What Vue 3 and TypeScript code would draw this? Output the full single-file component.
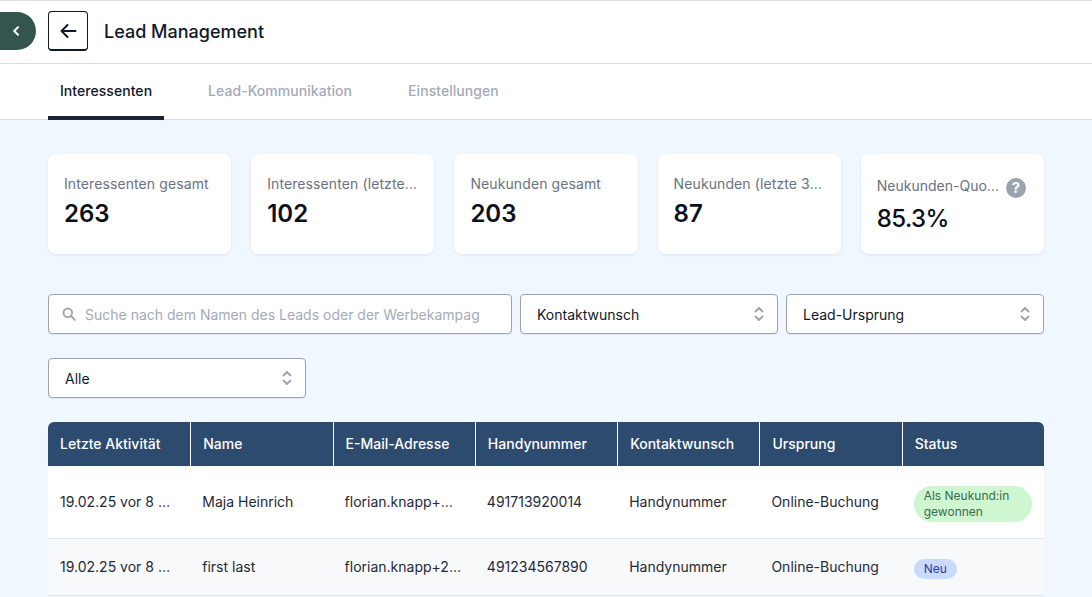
<script setup lang="ts">
interface Stat { label: string; value: string; help?: boolean }
interface Lead { activity: string; name: string; email: string; phone: string; contact: string; origin: string; status: string; kind: 'won' | 'new' }
const stats: Stat[] = [
  { label: 'Interessenten gesamt', value: '263' },
  { label: 'Interessenten (letzten 30 Tage)', value: '102' },
  { label: 'Neukunden gesamt', value: '203' },
  { label: 'Neukunden (letzte 30 Tage)', value: '87' },
  { label: 'Neukunden-Quote gesamt', value: '85.3%', help: true },
]
const columns = ['Letzte Aktivität', 'Name', 'E-Mail-Adresse', 'Handynummer', 'Kontaktwunsch', 'Ursprung', 'Status']
const leads: Lead[] = [
  { activity: '19.02.25 vor 8 Tagen', name: 'Maja Heinrich', email: 'florian.knapp+maja@example.de', phone: '491713920014', contact: 'Handynummer', origin: 'Online-Buchung', status: 'Als Neukund:in gewonnen', kind: 'won' },
  { activity: '19.02.25 vor 8 Tagen', name: 'first last', email: 'florian.knapp+2@example.de', phone: '491234567890', contact: 'Handynummer', origin: 'Online-Buchung', status: 'Neu', kind: 'new' },
]
</script>

<template>
  <div class="page">
    <header class="topbar">
      <button class="collapse" aria-label="Seitenleiste">
        <svg width="10" height="10" viewBox="0 0 10 10" fill="none"><path d="M7 1.2 3.2 5 7 8.8" stroke="#fff" stroke-width="2" stroke-linecap="round" stroke-linejoin="round"/></svg>
      </button>
      <button class="back" aria-label="Zurück">
        <svg width="18" height="18" viewBox="0 0 18 18" fill="none"><path d="M16.5 9H2.5M8.5 3 2.5 9l6 6" stroke="#111827" stroke-width="2" stroke-linecap="round" stroke-linejoin="round"/></svg>
      </button>
      <h1>Lead Management</h1>
    </header>
    <nav class="tabs">
      <a class="tab active">Interessenten</a>
      <a class="tab">Lead-Kommunikation</a>
      <a class="tab">Einstellungen</a>
    </nav>
    <main class="content">
      <section class="stats">
        <div v-for="s in stats" :key="s.label" class="card">
          <div class="label-row">
            <span class="label">{{ s.label }}</span>
            <svg v-if="s.help" class="help" width="20" height="20" viewBox="0 0 20 20"><circle cx="10" cy="10" r="10" fill="#9ca3af"/><text x="10" y="14.8" text-anchor="middle" class="help-mark">?</text></svg>
          </div>
          <div class="value">{{ s.value }}</div>
        </div>
      </section>
      <section class="filters">
        <div class="search">
          <svg width="16" height="16" viewBox="0 0 16 16" fill="none"><circle cx="6.8" cy="6.8" r="4.3" stroke="#9ca3af" stroke-width="1.8"/><path d="m10.2 10.2 3.6 3.6" stroke="#9ca3af" stroke-width="1.8" stroke-linecap="round"/></svg>
          <span class="placeholder">Suche nach dem Namen des Leads oder der Werbekampagne</span>
        </div>
        <div class="select"><span>Kontaktwunsch</span><svg class="updown" width="12" height="18" viewBox="0 0 12 18" fill="none"><path d="M2.5 6.5 6 3l3.5 3.5M2.5 11.5 6 15l3.5-3.5" stroke="#9ca3af" stroke-width="1.8" stroke-linecap="round" stroke-linejoin="round"/></svg></div>
        <div class="select"><span>Lead-Ursprung</span><svg class="updown" width="12" height="18" viewBox="0 0 12 18" fill="none"><path d="M2.5 6.5 6 3l3.5 3.5M2.5 11.5 6 15l3.5-3.5" stroke="#9ca3af" stroke-width="1.8" stroke-linecap="round" stroke-linejoin="round"/></svg></div>
      </section>
      <section class="filters second">
        <div class="select"><span>Alle</span><svg class="updown" width="12" height="18" viewBox="0 0 12 18" fill="none"><path d="M2.5 6.5 6 3l3.5 3.5M2.5 11.5 6 15l3.5-3.5" stroke="#9ca3af" stroke-width="1.8" stroke-linecap="round" stroke-linejoin="round"/></svg></div>
      </section>
      <table class="table">
        <thead>
          <tr><th v-for="c in columns" :key="c">{{ c }}</th></tr>
        </thead>
        <tbody>
          <tr v-for="l in leads" :key="l.name">
            <td><span class="cut">{{ l.activity }}</span></td>
            <td><span class="cut">{{ l.name }}</span></td>
            <td><span class="cut">{{ l.email }}</span></td>
            <td><span class="cut">{{ l.phone }}</span></td>
            <td><span class="cut">{{ l.contact }}</span></td>
            <td><span class="cut">{{ l.origin }}</span></td>
            <td class="status"><span class="badge" :class="l.kind">{{ l.status }}</span></td>
          </tr>
        </tbody>
      </table>
    </main>
  </div>
</template>

<style>
html, body { margin: 0; background: #f0f7ff; }
</style>

<style scoped>
* { box-sizing: border-box; }
.page { height: 597px; overflow: hidden; font-family: Inter, "Liberation Sans", sans-serif; color: #111827; background: #f0f7ff; display: flex; flex-direction: column; }
.topbar { height: 64px; flex: none; background: #fff; border-top: 1px solid #e0e0e0; border-bottom: 1px solid #d8e0ec; display: flex; align-items: center; }
.collapse { width: 36px; height: 38px; margin-top: -2px; border: 0; padding: 0 0 0 11px; background: #34554f; border-radius: 0 19px 19px 0; display: flex; align-items: center; justify-content: flex-start; }
.back { width: 40px; height: 40px; margin-left: 12px; margin-top: -2px; border: 1px solid #111827; border-bottom-width: 2px; border-radius: 4px; background: #fff; padding: 0; display: flex; align-items: center; justify-content: center; }
h1 { margin: 0 0 0 16px; font-size: 18px; font-weight: 500; line-height: 24px; color: #111827; }
.tabs { height: 56px; flex: none; background: #fff; border-bottom: 1px solid #d8e0ec; padding-left: 48px; display: flex; gap: 32px; }
.tab { height: 56px; padding: 0 12px 4px; display: flex; align-items: center; font-size: 14px; font-weight: 500; letter-spacing: 0.05px; color: #a5a9b5; }
.tab.active { color: #111827; box-shadow: inset 0 -4px 0 #1a2233; }
.content { padding: 34px 48px 0; }
.stats { display: grid; grid-template-columns: repeat(5, minmax(0, 1fr)); gap: 20px; }
.card { height: 100px; background: #fff; border-radius: 8px; padding: 20px 16px; box-shadow: 0 1px 3px rgba(17, 24, 39, 0.08); min-width: 0; display: flex; flex-direction: column; }
.label-row { display: flex; align-items: center; gap: 6px; height: 20px; }
.label { flex: 1; min-width: 0; font-size: 14px; line-height: 20px; color: #6b7280; white-space: nowrap; overflow: hidden; text-overflow: ellipsis; letter-spacing: 0.1px; }
.help { flex: none; margin-top: 4px; margin-right: 2px; }
.help-mark { font-size: 15px; font-weight: 700; fill: #fff; }
.value { margin-top: 4px; font-size: 24px; line-height: 32px; font-weight: 600; color: #0b0f19; }
.card:last-child .value { font-weight: 500; margin-top: 7px; letter-spacing: -0.6px; }
.card:last-child .label-row { margin-top: 2px; }
.card:last-child .label { letter-spacing: 0; }
.filters { display: grid; grid-template-columns: 464px 258px 258px; gap: 8px; margin-top: 40px; }
.filters.second { grid-template-columns: 258px; margin-top: 24px; }
.search, .select { height: 40px; background: #fff; border: 1px solid #9ca3af; border-radius: 4px; display: flex; align-items: center; font-size: 14px; box-shadow: 0 1px 1px rgba(17, 24, 39, 0.06); }
.search { padding: 0 32px 0 12px; gap: 8px; }
.search svg { flex: none; }
.placeholder { color: #a5a9b5; white-space: nowrap; overflow: hidden; }
.select { padding: 0 12px 0 16px; justify-content: space-between; color: #111827; }
.table { width: 100%; margin-top: 24px; border-collapse: separate; border-spacing: 0; table-layout: fixed; font-size: 14px; }
th { height: 44px; background: #2d4b6e; color: #fff; font-weight: 500; text-align: left; padding: 0 12px 2px; border-left: 1px solid #fff; }
th:first-child { border-top-left-radius: 6px; border-left: 0; }
th:last-child { border-top-right-radius: 6px; }
td { padding: 0 12px 2px; background: #fff; border-bottom: 1px solid #e3e6ec; color: #1f2937; }
td.status { padding: 4px 12px 0; }
tbody tr:nth-child(1) td { height: 73px; }
tbody tr:nth-child(2) td { height: 57px; background: #f8f9fb; }
.cut { display: block; overflow: hidden; white-space: nowrap; text-overflow: ellipsis; margin-right: 1.5px; }
.badge { display: inline-block; font-size: 12px; line-height: 16px; border-radius: 18px; padding: 2px 10px; }
.badge.won { background: #cdf6d1; color: #3c6b4c; width: 118px; display: block; }
.badge.new { background: #c9dafc; color: #2c3f9c; }
</style>
